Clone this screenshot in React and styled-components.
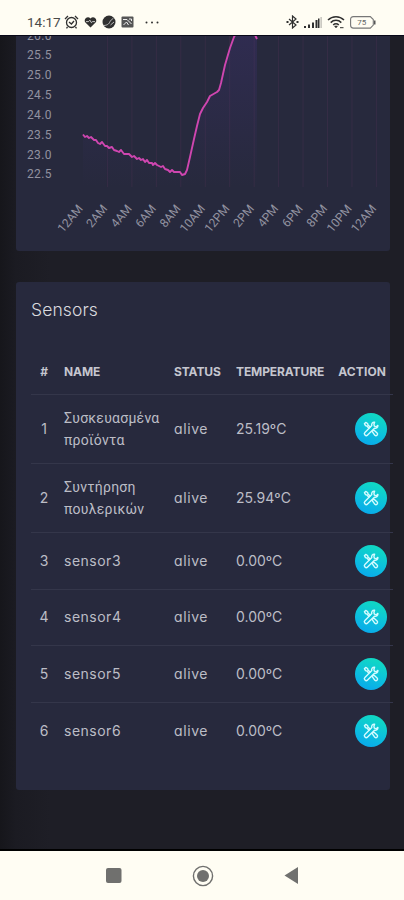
import styled, { createGlobalStyle } from "styled-components";

const GlobalStyle = createGlobalStyle`
  * {
    box-sizing: border-box;
  }

  body {
    margin: 0;
    background: #1e1e26;
    font-family: Inter, Roboto, sans-serif;
  }
`;

const Phone = styled.div`
  display: flex;
  flex-direction: column;
  width: 404px;
  height: 900px;
  overflow: hidden;
`;

const StatusBar = styled.header`
  display: flex;
  flex: none;
  align-items: flex-start;
  justify-content: space-between;
  height: 35px;
  padding: 14px 28px 0 27px;
  background: #fffdf3;
  color: #303030;
`;

const StatusGroup = styled.div`
  display: flex;
  align-items: center;
  gap: ${(props) => props.$gap}px;
  height: 16px;

  svg {
    display: block;
    flex: none;
  }
`;

const Clock = styled.span`
  width: 35px;
  margin-right: -3px;
  font-family: Roboto, sans-serif;
  font-size: 13.5px;
  line-height: 16px;
  color: #4a4a48;
`;

const Dots = styled.svg`
  margin-left: 6px;
`;

const Page = styled.main`
  display: flex;
  flex: 1;
  flex-direction: column;
  gap: 31px;
  min-height: 0;
  padding: 0 14px 0 16px;
  border-top: 1px solid #080818;
  border-bottom: 2px solid #000;
  background: linear-gradient(90deg, #16161b 0, #1b1b22 16px, #1e1e26 50px);
`;

const Card = styled.section`
  flex: none;
  width: 374px;
  height: ${(props) => props.$height}px;
  border-radius: ${(props) => (props.$cut ? "0 0 3px 3px" : "3px")};
  background: #27293d;
`;

const Chart = styled.svg`
  display: block;
  font-family: Roboto, sans-serif;
  font-size: 12px;
  fill: #9292a0;
`;

const Title = styled.h4`
  margin: 0;
  padding: 16px 15px 0;
  font-size: 17.5px;
  font-weight: 300;
  line-height: 24px;
  letter-spacing: 0.1px;
  color: #d9d9df;
  font-feature-settings: "cv11";
`;

const Table = styled.div`
  width: 362px;
  margin: 27px 0 0 15px;
`;

const Row = styled.div`
  display: grid;
  grid-template-columns: 33px 110px 62px 102px 1fr;
  align-items: center;
  height: ${(props) => props.$height}px;
  padding-bottom: 1px;
  border-top: 1px solid #34364a;
  font-size: 14px;
  line-height: 22px;
  color: #bcbdc6;
  font-feature-settings: "cv11";
`;

const HeadRow = styled(Row)`
  padding-bottom: 0;
  border-top: none;
  font-size: 12px;
  font-weight: 700;
  letter-spacing: -0.1px;
  color: #c5c6cf;
`;

const Index = styled.div`
  width: 26px;
  text-align: center;
`;

const Name = styled.div`
  width: 100px;
  font-family: ${(props) => (props.$greek ? "Roboto, sans-serif" : "inherit")};
  letter-spacing: ${(props) => (props.$greek ? "0.25px" : "0.5px")};
`;

const Status = styled.div`
  letter-spacing: 0.6px;
`;

const Action = styled.div`
  display: flex;
  justify-content: flex-end;
  padding-right: 6px;
`;

const ActionHead = styled(Action)`
  padding-right: 7px;
  letter-spacing: 0.1px;
`;

const ToolButton = styled.button`
  display: grid;
  place-items: center;
  width: 32px;
  height: 32px;
  padding: 0;
  border: none;
  border-radius: 50%;
  background: linear-gradient(20deg, #08a4ee, #0cc2dc 48%, #12dfbc);
  color: #d5fbff;
`;

const NavBar = styled.nav`
  display: flex;
  flex: none;
  align-items: center;
  justify-content: space-between;
  height: 49px;
  padding: 0 103px 0 104px;
  background: #fffdf3;
`;

const yTicks = ["26.0", "25.5", "25.0", "24.5", "24.0", "23.5", "23.0", "22.5"];
const xTicks = [
  "12AM", "2AM", "4AM", "6AM", "8AM", "10AM", "12PM",
  "2PM", "4PM", "6PM", "8PM", "10PM", "12AM",
];

const sensors = [
  { id: 1, name: "Συσκευασμένα προϊόντα", temp: "25.19ºC", greek: true, height: 69 },
  { id: 2, name: "Συντήρηση πουλερικών", temp: "25.94ºC", greek: true, height: 69 },
  { id: 3, name: "sensor3", temp: "0.00ºC", height: 57 },
  { id: 4, name: "sensor4", temp: "0.00ºC", height: 56 },
  { id: 5, name: "sensor5", temp: "0.00ºC", height: 57 },
  { id: 6, name: "sensor6", temp: "0.00ºC", height: 57 },
];

const line =
  "83,134.5 85,137 87,136 89,138 91,137 94,140 96,140 98,143 100,144 102,142 105,146 107,146 109,148 112,147 114,150 117,151 119,152 121,150 124,154 126,154 129,154 132,157 134,156 137,159 139,158 141,160 143,159 145,162 147,160 149,163 152,163 153,165 155,163 157,165 159,166 161,167 163,166 165,169 168,170 170,172 172,170 174,172 177,172 180,172 182,175 185,174 187,170 190,157 194,139 197,126 200,114 203,108 207,102 210,96 217,92 219,90 221,83 225,65 230,48 234,37 238,30 251,30 255,35 257,39";

function ToolsIcon() {
  return (
    <svg width="18" height="18" viewBox="0 0 18 18" fill="none" stroke="currentColor" strokeWidth="1.4" strokeLinejoin="round" strokeLinecap="round">
      <path d="M12.6 2.2c-2.2-.2-3.4 1.6-2.8 3.4L2.9 12.4c-1.7 1.8.9 4.4 2.7 2.7l6.9-6.8c1.9.5 3.6-.8 3.4-2.9l-1.6 1.4-1.9-.6-.5-1.8Z" />
      <path d="M6.9 8.2 4.9 6 3.5 5.6 2.4 3.7l1.3-1.3 1.9 1.1.4 1.4 2.2 2M10.2 11.6l1.6-1.6 3.3 3.1c1.4 1.5-.8 3.6-2.2 2.2Z" />
    </svg>
  );
}

function TemperatureChart() {
  return (
    <Chart width="373" height="214" viewBox="16 36 373 214">
      <defs>
        <linearGradient id="area" x1="0" y1="0" x2="0" y2="1">
          <stop offset="0" stopColor="#5338a0" stopOpacity="0.2" />
          <stop offset="1" stopColor="#5338a0" stopOpacity="0" />
        </linearGradient>
      </defs>
      {xTicks.map((label, i) => (
        <g key={i}>
          {i > 0 && (
            <path d={`M${83 + i * 24.45} 36V187`} stroke="#b04a8c" strokeOpacity="0.11" />
          )}
          <text transform={`translate(${83.5 + i * 24.45} 209) rotate(-50)`} textAnchor="end">
            {label}
          </text>
        </g>
      ))}
      {yTicks.map((label, i) => (
        <text key={label} x="27" y={39.5 + i * 19.85} textLength="24.5">
          {label}
        </text>
      ))}
      <polygon points={`${line} 257,187 83,187`} fill="url(#area)" />
      <polyline points={line} fill="none" stroke="#cf46b0" strokeWidth="1.9" strokeLinejoin="round" />
    </Chart>
  );
}

function LeftStatus() {
  return (
    <StatusGroup $gap={5}>
      <Clock>14:17</Clock>
      <svg width="15" height="14" viewBox="0 0 15 14" fill="none" stroke="currentColor" strokeWidth="1.3">
        <circle cx="7.5" cy="7.5" r="5" />
        <path d="M1 4 4 1M14 4l-3-3M5 7l2.4 2L10 6M3.5 12 2.5 13.3M11.5 12l1 1.3" />
      </svg>
      <svg width="13" height="12" viewBox="0 0 13 12">
        <path d="M6.5 11.5 1.2 6.2C-.8 3.5 3.5-.8 6.5 2.5c3-3.3 7.3 1 5.3 3.7Z" fill="currentColor" />
        <path d="M2 5.6h2.5l1.4-1.4 1.5 2.5 1.2-1.1H11" fill="none" stroke="#eee" strokeWidth=".8" />
      </svg>
      <svg width="14" height="14" viewBox="0 0 14 14">
        <circle cx="7" cy="7" r="6.5" fill="currentColor" />
        <path d="M2 10.5c4-.3 5.5-2.2 6-4.2L11.5 3M8.5 10 12 7" fill="none" stroke="#ccc" strokeWidth=".9" />
      </svg>
      <svg width="13" height="12" viewBox="0 0 13 12">
        <rect x=".5" y=".5" width="12" height="11" rx="1" fill="#555" />
        <path d="M2 3.5h4l4.5 4.5M2.5 9l3-3 2 3M8 3h2.5v2" fill="none" stroke="#eee" />
      </svg>
      <Dots width="14" height="3" viewBox="0 0 14 3" fill="currentColor">
        <circle cx="1.5" cy="1.5" r="1" />
        <circle cx="7" cy="1.5" r="1" />
        <circle cx="12.5" cy="1.5" r="1" />
      </Dots>
    </StatusGroup>
  );
}

function RightStatus() {
  return (
    <StatusGroup $gap={5}>
      <svg width="13" height="14" viewBox="0 0 13 14" fill="none" stroke="currentColor" strokeWidth="1.2">
        <path d="m3 4 7 6-3.5 3V1L10 4l-7 6" />
        <path d="M.5 7h2M10.5 7h2" strokeWidth="1.8" />
      </svg>
      <svg width="18" height="12" viewBox="0 0 18 12" fill="currentColor">
        <path d="M0 10h2v2H0ZM4 8.5h2V12H4ZM8 6.5h2V12H8ZM11.5 4h2v8h-2Z" />
        <path d="M14 2.5h1.5V12H14Z" />
        <path d="M16.5 1h1.2v11h-1.2Z" opacity=".35" />
      </svg>
      <svg width="18" height="14" viewBox="0 0 18 14" fill="none" stroke="currentColor" strokeWidth="1.5">
        <path d="M1 5c4.5-4.5 11.5-4.5 16 0M3.7 7.6c3-3 7.6-3 10.6 0M6.2 10c1.6-1.6 4-1.6 5.6 0" />
        <path d="m7.5 11 1.5 2 1.5-2Z" fill="currentColor" strokeWidth=".5" />
        <path d="M13 12.7h3.5" strokeWidth="1" />
      </svg>
      <svg width="26" height="13" viewBox="0 0 26 13">
        <path d="M3.5.6h16.8l3 3v5.5l-3 3H3.5c-2 0-2.9-1-2.9-2.9V3.5C.6 1.6 1.5.6 3.5.6Z" fill="none" stroke="#777" strokeWidth="1.1" />
        <path d="M24 4.5h1.5v4H24Z" fill="#555" />
        <text x="11.8" y="9.2" textAnchor="middle" fontSize="8" fontFamily="Roboto" fill="#666">75</text>
      </svg>
    </StatusGroup>
  );
}

export default function App() {
  return (
    <Phone>
      <GlobalStyle />
      <StatusBar>
        <LeftStatus />
        <RightStatus />
      </StatusBar>

      <Page>
        <Card $height={215} $cut>
          <TemperatureChart />
        </Card>

        <Card $height={508}>
          <Title>Sensors</Title>
          <Table>
            <HeadRow $height={45}>
              <Index>#</Index>
              <div>NAME</div>
              <div>STATUS</div>
              <div>TEMPERATURE</div>
              <ActionHead>ACTION</ActionHead>
            </HeadRow>
            {sensors.map((sensor) => (
              <Row key={sensor.id} $height={sensor.height}>
                <Index>{sensor.id}</Index>
                <Name $greek={sensor.greek}>{sensor.name}</Name>
                <Status>alive</Status>
                <div>{sensor.temp}</div>
                <Action>
                  <ToolButton aria-label="Sensor settings">
                    <ToolsIcon />
                  </ToolButton>
                </Action>
              </Row>
            ))}
          </Table>
        </Card>
      </Page>

      <NavBar>
        <svg width="19" height="19" viewBox="0 0 19 19">
          <rect x="2" y="2" width="15.5" height="15" rx="2" fill="#70706e" />
        </svg>
        <svg width="22" height="22" viewBox="0 0 22 22">
          <circle cx="11" cy="11" r="9.6" fill="none" stroke="#70706e" strokeWidth="1.4" />
          <circle cx="11" cy="11" r="6" fill="#70706e" />
        </svg>
        <svg width="19" height="19" viewBox="0 0 19 19">
          <path d="M2.5 9.5 16 1v17Z" fill="#70706e" />
        </svg>
      </NavBar>
    </Phone>
  );
}
